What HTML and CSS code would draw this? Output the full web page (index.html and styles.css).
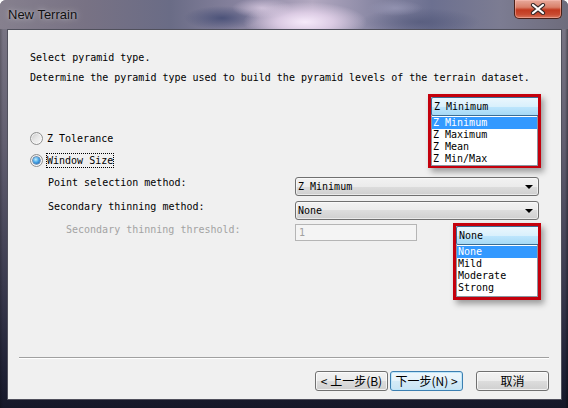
FILE: index.html
```html
<!DOCTYPE html>
<html>
<head>
<meta charset="utf-8">
<title>New Terrain</title>
<link rel="stylesheet" href="styles.css">
</head>
<body>
<div class="window">
  <div class="titlebar">
    <span class="title">New Terrain</span>
    <div class="close">
      <svg width="16" height="12" viewBox="0 0 16 12">
        <path d="M3 2 L13 10 M13 2 L3 10" stroke="#3a2a2a" stroke-width="4.2" stroke-linecap="round" fill="none"/>
        <path d="M3 2 L13 10 M13 2 L3 10" stroke="#ffffff" stroke-width="2.2" stroke-linecap="round" fill="none"/>
      </svg>
    </div>
  </div>
  <div class="client">
    <p class="line">Select pyramid type.</p>
    <p class="line l2">Determine the pyramid type used to build the pyramid levels of the terrain dataset.</p>
    <div class="radios">
      <div class="radio"><span class="dot"></span><span class="rtext">Z Tolerance</span></div>
      <div class="radio on"><span class="dot"></span><span class="rtext focus">Window Size</span></div>
    </div>
    <div class="form">
      <div class="row">
        <span class="lbl">Point selection method:</span>
        <div class="combo"><span>Z Minimum</span><i class="arrow"></i></div>
      </div>
      <div class="row r2">
        <span class="lbl">Secondary thinning method:</span>
        <div class="combo"><span>None</span><i class="arrow"></i></div>
      </div>
      <div class="row">
        <span class="lbl dis">Secondary thinning threshold:</span>
        <div class="textbox">1</div>
      </div>
    </div>
    <div class="footer">
      <div class="sep"></div>
      <div class="buttons">
        <div class="btn">&lt; 上一步(B)</div>
        <div class="btn default">下一步(N) &gt;</div>
        <div class="btn cancel">取消</div>
      </div>
    </div>
  </div>

  <div class="popup p1">
    <div class="phead">Z Minimum</div>
    <div class="plist">
      <div class="item sel">Z Minimum</div>
      <div class="item">Z Maximum</div>
      <div class="item">Z Mean</div>
      <div class="item">Z Min/Max</div>
    </div>
  </div>
  <div class="popup p2">
    <div class="phead">None</div>
    <div class="plist">
      <div class="item sel">None</div>
      <div class="item">Mild</div>
      <div class="item">Moderate</div>
      <div class="item">Strong</div>
    </div>
  </div>
</div>
</body>
</html>
```
FILE: styles.css
```css
html, body {
  margin: 0;
  padding: 0;
  background: #ffffff;
}

.window {
  position: relative;
  width: 568px;
  height: 408px;
  box-sizing: border-box;
  display: flex;
  flex-direction: column;
  overflow: hidden;
  border-radius: 6px 6px 0 0;
  background:
    linear-gradient(90deg, rgba(0,0,0,0.2) 0, rgba(0,0,0,0) 3px, rgba(0,0,0,0) 565px, rgba(0,0,0,0.35) 568px),
    linear-gradient(180deg, #7e7a88 0%, #625f70 35%, #3a3a4e 70%, #1e2034 92%, #161828 100%);
  font-family: "DejaVu Sans Mono", "Liberation Mono", monospace;
  font-size: 10px;
  color: #000;
}

.titlebar {
  height: 29px;
  flex: none;
  display: flex;
  align-items: flex-start;
  padding: 0 6px 0 8px;
  background:
    radial-gradient(ellipse 62px 20px at 305px 22px, rgba(246,234,250,1) 0, rgba(232,214,238,0.8) 45%, rgba(232,214,238,0) 100%),
    radial-gradient(ellipse 30px 10px at 262px 8px, rgba(230,214,236,0.7) 0, rgba(230,214,236,0) 100%),
    radial-gradient(ellipse 38px 12px at 222px 18px, rgba(70,78,118,0.9) 0, rgba(70,78,118,0) 100%),
    radial-gradient(ellipse 28px 8px at 395px 8px, rgba(150,150,180,0.8) 0, rgba(150,150,180,0) 100%),
    radial-gradient(ellipse 60px 14px at 420px 22px, rgba(80,86,120,0.7) 0, rgba(80,86,120,0) 100%),
    linear-gradient(90deg, #86808e 0%, #787284 15%, #6a6c86 30%, #8e88a4 45%, #b2a8c0 55%, #8c8aa6 65%, #6c7090 76%, #7c7c92 88%, #6e6c7c 100%);
}

.title {
  font-family: "Liberation Sans", Arial, sans-serif;
  font-size: 13px;
  line-height: 29px;
  color: #101010;
  text-shadow: 0 0 6px rgba(255,255,255,0.5), 0 0 2px rgba(255,255,255,0.35);
}

.close {
  margin-left: auto;
  width: 48px;
  height: 19px;
  box-sizing: border-box;
  border: 1px solid #4a2018;
  border-top: none;
  border-radius: 0 0 5px 5px;
  background: linear-gradient(180deg, #e8aa9c 0%, #d9806a 40%, #c2391f 55%, #c84a30 80%, #d8775e 100%);
  box-shadow: inset 0 0 0 1px rgba(255,200,190,0.45);
  display: flex;
  align-items: center;
  justify-content: center;
}

.client {
  margin: 0 6px 0 7px;
  height: 371px;
  flex: none;
  box-sizing: border-box;
  border: 1px solid #50505c;
  background: #f0f0f0;
  padding: 22px 12px 8px 0;
  display: flex;
  flex-direction: column;
}

.line {
  margin: 0 0 0 22px;
  line-height: 12px;
  white-space: nowrap;
}

.l2 {
  margin-top: 8px;
}

.radios {
  margin: 43px 0 0 22px;
}

.radio {
  display: flex;
  align-items: center;
  height: 22px;
}

.dot {
  width: 13px;
  height: 13px;
  box-sizing: border-box;
  border-radius: 50%;
  border: 1px solid #8e8f8f;
  background: linear-gradient(135deg, #c8c8c8 0%, #e6e6e6 45%, #fafafa 100%);
  box-shadow: inset 0 0 0 1px rgba(255,255,255,0.6);
  margin-right: 3px;
  display: flex;
  align-items: center;
  justify-content: center;
}

.radio.on .dot::after {
  content: "";
  width: 7px;
  height: 7px;
  border-radius: 50%;
  background: radial-gradient(circle at 40% 35%, #c4f0ff 0, #4aa8e8 45%, #0e4c9a 100%);
  box-shadow: 0 0 0 0.5px #1b4f8c;
}

.rtext {
  line-height: 13px;
  padding: 1px 1px;
}

.focus {
  outline: 1px dotted #000;
  outline-offset: -1px;
}

.form {
  margin-top: 6px;
}

.row {
  display: flex;
  align-items: flex-start;
  height: 24px;
}

.row.r2 {
  height: 23px;
}

.lbl {
  width: 287px;
  flex: none;
  box-sizing: border-box;
  padding-left: 40px;
  line-height: 12px;
  white-space: nowrap;
}

.lbl.dis {
  padding-left: 58px;
  color: #a3a3a3;
}

.combo {
  width: 244px;
  height: 19px;
  box-sizing: border-box;
  border: 1px solid #707070;
  border-radius: 3px;
  background: linear-gradient(180deg, #f2f2f2 0%, #ebebeb 50%, #dddddd 50%, #cfcfcf 100%);
  box-shadow: inset 0 0 0 1px rgba(255,255,255,0.55);
  display: flex;
  align-items: center;
  padding: 0 5px 0 2px;
  line-height: 12px;
}

.arrow {
  margin-left: auto;
  width: 0;
  height: 0;
  border-left: 4px solid transparent;
  border-right: 4px solid transparent;
  border-top: 4px solid #000;
}

.textbox {
  width: 122px;
  height: 17px;
  box-sizing: border-box;
  border: 1px solid #b5b5b5;
  background: #f4f4f4;
  color: #a0a0a0;
  padding-left: 3px;
  line-height: 15px;
}

.footer {
  margin-top: auto;
}

.sep {
  margin-left: 11px;
  border-top: 1px solid #a0a0a0;
  border-bottom: 1px solid #ffffff;
}

.buttons {
  display: flex;
  justify-content: flex-end;
  margin-top: 12px;
}

.btn {
  width: 73px;
  height: 20px;
  box-sizing: border-box;
  border: 1px solid #707070;
  border-radius: 3px;
  background: linear-gradient(180deg, #f2f2f2 0%, #ebebeb 50%, #dddddd 50%, #cfcfcf 100%);
  box-shadow: inset 0 0 0 1px rgba(255,255,255,0.7);
  font-family: "Noto Sans CJK SC", sans-serif;
  font-size: 12px;
  line-height: 18px;
  text-align: center;
  white-space: nowrap;
  color: #000;
}

.btn.default {
  margin-left: 2px;
  border-color: #3c7fb1;
  background: linear-gradient(180deg, #eef7fc 0%, #e4f2fa 50%, #d4ebf7 50%, #c8e4f4 100%);
  box-shadow: inset 0 0 0 1px #bfe6f9;
}

.btn.cancel {
  margin-left: 13px;
}

.popup {
  position: absolute;
  box-sizing: border-box;
  border: 3px solid #c4000c;
  background: #ffffff;
  box-shadow: 3px 4px 6px rgba(0,0,0,0.35);
  display: flex;
  flex-direction: column;
}

.p1 {
  left: 428px;
  top: 94px;
  width: 113px;
  height: 74px;
}

.p2 {
  left: 453px;
  top: 223px;
  width: 88px;
  height: 77px;
}

.phead {
  height: 19px;
  flex: none;
  box-sizing: border-box;
  border: 1px solid #3a6c94;
  border-right: none;
  border-radius: 2px 0 0 2px;
  background: linear-gradient(180deg, #eaf6fd 0%, #d9f0fc 50%, #bee6fd 50%, #a7d9f5 100%);
  padding-left: 2px;
  line-height: 17px;
}

.plist {
  flex: 1;
  border: 1px solid #8a96a2;
  border-top: none;
  padding-top: 1px;
}

.item {
  height: 12px;
  line-height: 12px;
  padding-left: 1px;
  white-space: nowrap;
}

.item.sel {
  background: #3399ff;
  color: #ffffff;
}
```
